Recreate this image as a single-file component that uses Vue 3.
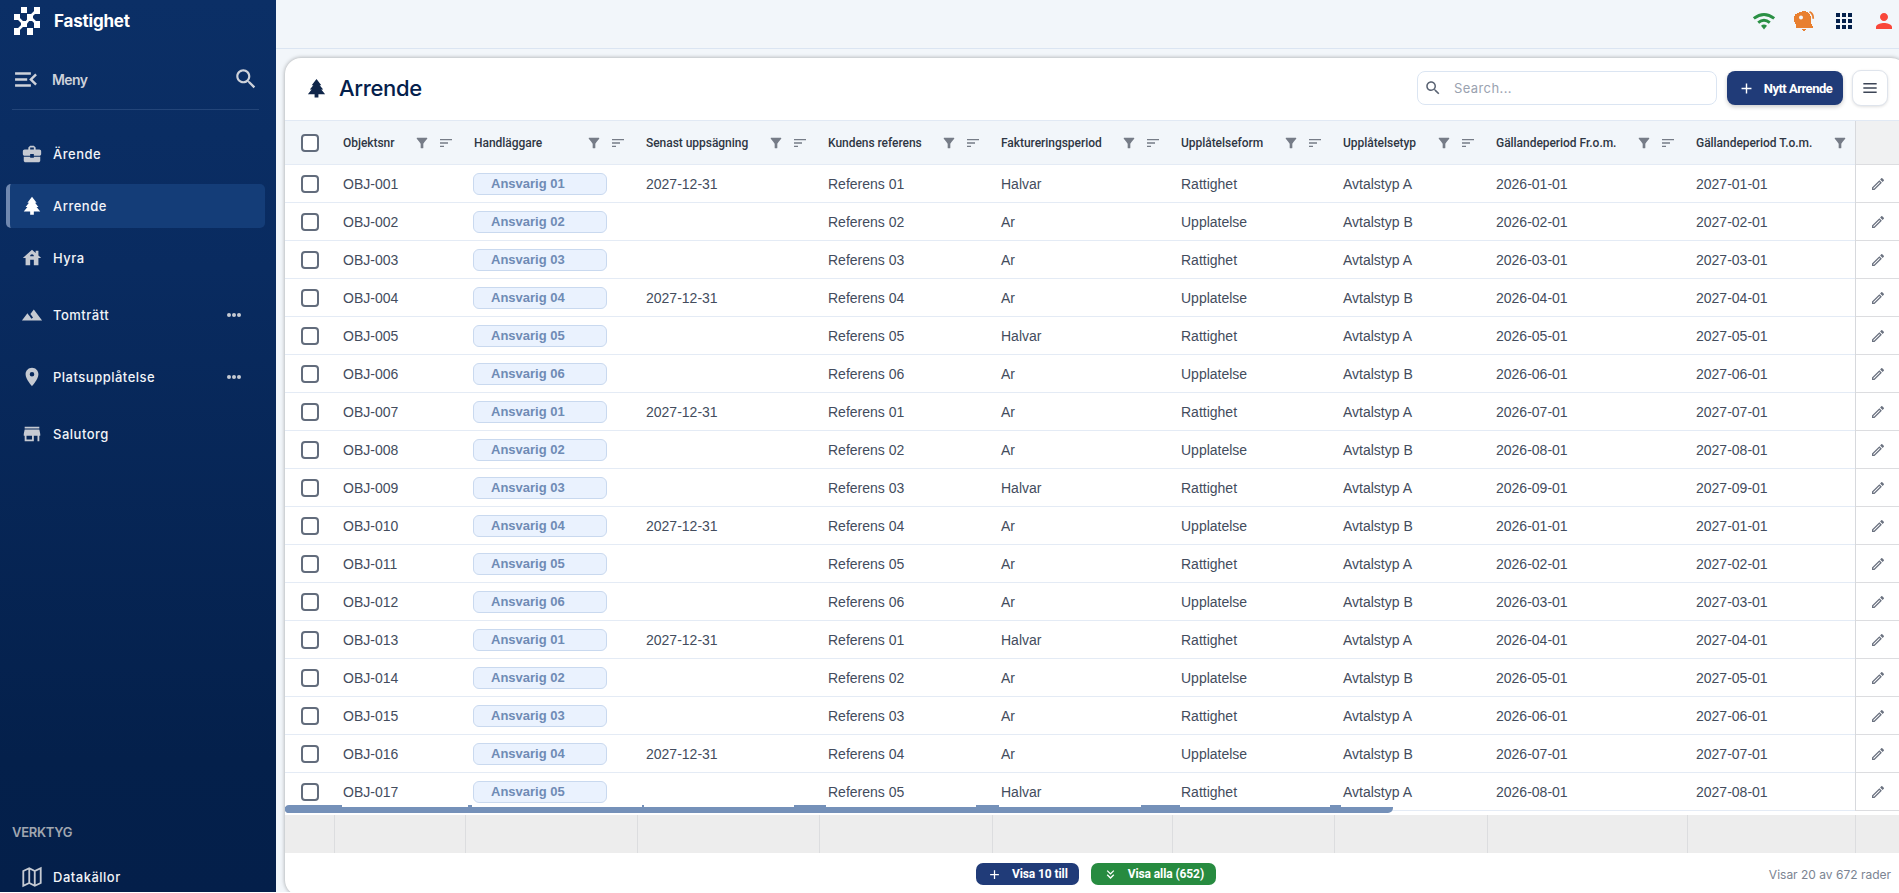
<script setup>
import { ref } from 'vue';

const search = ref('');

const icons = {
  work: 'M10 16v-1H3.01L3 19c0 1.11.89 2 2 2h14c1.11 0 2-.89 2-2v-4h-7v1h-4zm10-9h-4.01V5l-2-2h-4l-2 2v2H4c-1.1 0-2 .9-2 2v3c0 1.11.89 2 2 2h6v-2h4v2h6c1.1 0 2-.9 2-2V9c0-1.1-.9-2-2-2zm-6 0h-4V5h4v2z',
  tree: 'M10 21.500v-3.500H3l4-5H5l3.700-4.500H7l5-6.500 5 6.500h-1.700L19 13h-2l4 5h-7v3.500h-4z',
  house: 'M19 9.3V4h-3v2.6L12 3 2 12h3v8h5v-6h4v6h5v-8h3l-3-2.7zM10 10c0-1.1.9-2 2-2s2 .9 2 2h-4z',
  terrain: 'M14 6l-3.75 5 2.85 3.8-1.6 1.2C9.81 13.75 7 10 7 10l-6 8h22L14 6z',
  pin: 'M12 2C8.13 2 5 5.13 5 9c0 5.25 7 13 7 13s7-7.75 7-13c0-3.87-3.13-7-7-7zm0 9.5a2.5 2.5 0 0 1 0-5 2.5 2.5 0 0 1 0 5z',
  store: 'M20 4H4v2h16V4zm1 10v-2l-1-5H4l-1 5v2h1v6h10v-6h4v6h2v-6h1zm-9 4H6v-4h6v4z',
  search: 'M15.5 14h-.79l-.28-.27C15.41 12.59 16 11.11 16 9.5 16 5.91 13.09 3 9.5 3S3 5.91 3 9.5 5.91 16 9.5 16c1.61 0 3.09-.59 4.23-1.57l.27.28v.79l5 4.99L20.49 19l-4.99-5zm-6 0C7.01 14 5 11.99 5 9.5S7.01 5 9.5 5 14 7.01 14 9.5 11.99 14 9.5 14z',
  filter: 'M4.25 5.61C6.27 8.2 10 13 10 13v6c0 .55.45 1 1 1h2c.55 0 1-.45 1-1v-6s3.72-4.8 5.74-7.39c.51-.66.04-1.61-.79-1.61H5.04c-.83 0-1.3.95-.79 1.61z',
  sort: 'M3 18h6v-2H3v2zM3 6v2h18V6H3zm0 7h12v-2H3v2z',
  edit: 'M14.06 9.02l.92.92L5.92 19H5v-.92l9.06-9.06M17.66 3c-.25 0-.51.1-.7.29l-1.83 1.83 3.75 3.75 1.83-1.83a.996.996 0 0 0 0-1.41l-2.34-2.34c-.2-.2-.45-.29-.71-.29zm-3.6 3.19L3 17.25V21h3.75L17.81 9.94l-3.75-3.75z',
  plus: 'M19 13h-6v6h-2v-6H5v-2h6V5h2v6h6v2z'
};

const menuItems = [
  { label: 'Ärende', icon: 'work', size: 'normal' },
  { label: 'Arrende', icon: 'tree', size: 'normal', active: true },
  { label: 'Hyra', icon: 'house', size: 'short' },
  { label: 'Tomträtt', icon: 'terrain', size: 'tall', more: true },
  { label: 'Platsupplåtelse', icon: 'pin', size: 'tall', more: true },
  { label: 'Salutorg', icon: 'store', size: 'last' }
];

const columns = [
  { key: 'id', label: 'Objektsnr' },
  { key: 'handler', label: 'Handläggare' },
  { key: 'notice', label: 'Senast uppsägning' },
  { key: 'reference', label: 'Kundens referens' },
  { key: 'billing', label: 'Faktureringsperiod' },
  { key: 'form', label: 'Upplåtelseform' },
  { key: 'type', label: 'Upplåtelsetyp' },
  { key: 'from', label: 'Gällandeperiod Fr.o.m.' },
  { key: 'to', label: 'Gällandeperiod T.o.m.' }
];

const pad = (n) => String(n).padStart(2, '0');

const rows = Array.from({ length: 17 }, (_, i) => ({
  id: 'OBJ-0' + pad(i + 1),
  handler: 'Ansvarig ' + pad((i % 6) + 1),
  notice: i % 3 === 0 ? '2027-12-31' : '',
  reference: 'Referens ' + pad((i % 6) + 1),
  billing: i % 4 === 0 ? 'Halvar' : 'Ar',
  form: i % 2 ? 'Upplatelse' : 'Rattighet',
  type: i % 2 ? 'Avtalstyp B' : 'Avtalstyp A',
  from: `2026-${pad((i % 9) + 1)}-01`,
  to: `2027-${pad((i % 9) + 1)}-01`
}));

// raised parts of the horizontal scrollbar thumb, relative to the table
const ridges = [
  { left: 183, width: 4 },
  { left: 357, width: 2 },
  { left: 509, width: 32 },
  { left: 691, width: 23 },
  { left: 856, width: 39 },
  { left: 1045, width: 11 }
];
</script>

<template>
  <div class="layout">
    <aside class="sidebar">
      <div class="brand">
        <svg class="logo" viewBox="0 0 26 28">
          <path d="M7 0h6v6H7zM20 0h6v7h-6zM0 7h6v6H0zM13 7h6v7h-6zM7 14h6v6H7zM20 14h6v7h-6zM0 21h6v7H0zM13 21h6v7h-6z" />
          <path class="links" d="M18 8l4-4M4 11l5 5M12 16l3-4M17 11l5 5M4 23l5-5" />
        </svg>
        <span class="brand-name">Fastighet</span>
      </div>

      <div class="menu-head">
        <svg class="menu-open" viewBox="3 5 18 14"><path d="M3 18h13v-2H3v2zM3 13h10v-2H3v2zm0-7v2h13V6H3zm18 9.59L17.42 12 21 8.41 19.59 7l-5 5 5 5L21 15.59z" /></svg>
        <span>Meny</span>
        <svg class="menu-search" viewBox="0 0 24 24"><path :d="icons.search" /></svg>
      </div>

      <nav class="nav">
        <a v-for="item in menuItems" :key="item.label" class="nav-item" :class="[item.size, { active: item.active }]">
          <svg class="nav-icon" viewBox="0 0 24 24"><path :d="icons[item.icon]" /></svg>
          <span>{{ item.label }}</span>
          <svg v-if="item.more" class="more" viewBox="0 0 14 4"><circle cx="2" cy="2" r="2" /><circle cx="7" cy="2" r="2" /><circle cx="12" cy="2" r="2" /></svg>
        </a>
      </nav>

      <div class="tools">
        <div class="tools-title">VERKTYG</div>
        <a class="nav-item normal">
          <svg class="nav-icon outline" viewBox="0 0 24 24"><path d="M2.500 5.500l6.500-3 6 3 6.500-3v16l-6.500 3-6-3-6.500 3zM9 2.500v16M15 5.500v16" /></svg>
          <span>Datakällor</span>
        </a>
      </div>
    </aside>

    <div class="content">
      <header class="topbar">
        <svg class="icon-24 green" viewBox="0 0 24 24"><path class="arc" d="M1.800 9.400Q12 1.600 22.200 9.400M6.200 13.600Q12 9 17.800 13.600" /><path d="M9 16.800q3-2.400 6 0L12 20.500z" /></svg>
        <svg class="icon-24 orange" viewBox="0 0 24 24"><path fill-rule="evenodd" d="M4 5h1V4h2V3h3V2h4v1h2v1h1v1h1v2h1v8h1v2h1v2H4v-4H3v-2H2V7h1V5zm5 1.500a2 2 0 1 0 0 4 2 2 0 0 0 0-4zM10 20h4v1h-1v1h-2v-1h-1z" /><path class="ring" d="M17.500 2.800q4 2 3.700 7" /></svg>
        <svg class="icon-24 navy" viewBox="0 0 24 24"><path d="M4 8h4V4H4v4zm6 12h4v-4h-4v4zm-6 0h4v-4H4v4zm0-6h4v-4H4v4zm6 0h4v-4h-4v4zm6-10v4h4V4h-4zm-6 4h4V4h-4v4zm6 6h4v-4h-4v4zm0 6h4v-4h-4v4z" /></svg>
        <svg class="icon-24 red" viewBox="0 0 24 24"><path d="M12 12c2.210 0 4-1.790 4-4s-1.790-4-4-4-4 1.790-4 4 1.790 4 4 4zm0 2c-2.670 0-8 1.340-8 4v2h16v-2c0-2.660-5.330-4-8-4z" /></svg>
      </header>

      <main class="card">
        <div class="card-head">
          <svg class="title-icon" viewBox="0 0 24 24"><path :d="icons.tree" /></svg>
          <h1>Arrende</h1>
          <label class="search-box">
            <svg viewBox="0 0 24 24"><path :d="icons.search" /></svg>
            <input v-model="search" type="text" placeholder="Search..." />
          </label>
          <button class="btn-new">
            <svg viewBox="0 0 24 24"><path :d="icons.plus" /></svg>
            <span>Nytt Arrende</span>
          </button>
          <button class="btn-menu">
            <svg viewBox="0 0 24 24"><path d="M4 18h16v-1.800H4V18zm0-5.100h16v-1.800H4v1.800zM4 6v1.800h16V6H4z" /></svg>
          </button>
        </div>

        <div class="table">
          <div class="row head">
            <div class="cell check"><span class="checkbox"></span></div>
            <div v-for="col in columns" :key="col.key" class="cell th" :class="col.key">
              <span>{{ col.label }}</span>
              <svg class="filter" viewBox="0 0 24 24"><path :d="icons.filter" /></svg>
              <svg v-if="col.key !== 'to'" class="sort" viewBox="0 0 24 24"><path :d="icons.sort" /></svg>
            </div>
            <div class="cell edit"></div>
          </div>

          <div v-for="row in rows" :key="row.id" class="row">
            <div class="cell check"><span class="checkbox"></span></div>
            <div v-for="col in columns" :key="col.key" class="cell">
              <span v-if="col.key === 'handler'" class="chip">{{ row.handler }}</span>
              <template v-else>{{ row[col.key] }}</template>
            </div>
            <div class="cell edit"><svg viewBox="0 0 24 24"><path :d="icons.edit" /></svg></div>
          </div>

          <div class="scroll-thumb">
            <span class="cap"></span>
            <span v-for="r in ridges" :key="r.left" class="ridge" :style="{ left: r.left + 'px', width: r.width + 'px' }"></span>
          </div>
          <div class="scroll-gap"></div>
          <div class="row summary">
            <div v-for="n in 11" :key="n" class="cell"></div>
          </div>
        </div>

        <footer class="card-foot">
          <div class="foot-actions">
            <button class="btn-more">
              <svg viewBox="0 0 24 24"><path :d="icons.plus" /></svg>
              <span>Visa 10 till</span>
            </button>
            <button class="btn-all">
              <svg viewBox="0 0 24 24"><path d="M18 6.410L16.590 5 12 9.580 7.410 5 6 6.410l6 6zM18 13l-1.410-1.410L12 16.170l-4.590-4.580L6 13l6 6z" /></svg>
              <span>Visa alla (652)</span>
            </button>
          </div>
          <span class="count">Visar 20 av 672 rader</span>
        </footer>
      </main>
    </div>
  </div>
</template>

<style>
body {
  margin: 0;
  background: #fff;
  overflow: hidden;
}
</style>

<style scoped>
* {
  box-sizing: border-box;
}

.layout {
  display: flex;
  width: 100%;
  height: 892px;
  overflow: hidden;
  font-family: Inter, "Liberation Sans", sans-serif;
}

svg {
  display: block;
  flex: none;
  fill: currentColor;
}

button {
  display: flex;
  align-items: center;
  justify-content: center;
  border: none;
  padding: 0;
  font-family: Roboto, sans-serif;
}

.icon-24 {
  width: 24px;
  height: 24px;
}

/* --- Sidebar --- */
.sidebar {
  display: flex;
  flex-direction: column;
  flex: none;
  width: 276px;
  background: linear-gradient(180deg, #0b2f66 0%, #092b60 30%, #04204b 85%, #041f4a 100%);
  color: #ced2da;
}

.brand {
  display: flex;
  align-items: center;
  gap: 14px;
  height: 42px;
  padding-left: 14px;
  color: #fff;
}

.logo {
  width: 26px;
  height: 28px;
}

.links {
  stroke: currentColor;
  stroke-width: 2.6;
  fill: none;
}

.brand-name {
  font-size: 17px;
  font-weight: 700;
  letter-spacing: -0.2px;
}

.menu-head {
  display: flex;
  align-items: center;
  height: 68px;
  margin: 0 17px 0 12px;
  padding: 7px 0 0 3px;
  border-bottom: 1px solid #234579;
  gap: 15px;
  font-size: 14px;
  font-weight: 600;
  letter-spacing: -0.6px;
}

.menu-open {
  width: 22px;
  height: 17px;
}

.menu-search {
  width: 26px;
  height: 26px;
  margin-left: auto;
}

.nav {
  padding: 22px 11px 0 6px;
}

.nav-item {
  display: flex;
  align-items: center;
  gap: 10px;
  height: 44px;
  padding-left: 15px;
  color: #f2f4f8;
  font-size: 13px;
  font-weight: 500;
  letter-spacing: 0.5px;
}

.nav-item.normal {
  margin-bottom: 8px;
}

.nav-item.short {
  margin-bottom: 4px;
}

.nav-item.tall {
  height: 62px;
}

.nav-item.last {
  margin-top: 4px;
}

.nav-item.active {
  padding-left: 11px;
  border-left: 4px solid #7088b0;
  border-radius: 5px;
  background: #143d78;
}

.nav-icon {
  width: 22px;
  height: 22px;
  color: #c6cad2;
}

.active .nav-icon {
  color: #fff;
}

.outline path {
  fill: none;
  stroke: currentColor;
  stroke-width: 2;
}

.more {
  width: 14px;
  height: 4px;
  margin: 0 24px 0 auto;
  color: #c6cad2;
}

.tools {
  margin-top: auto;
  padding-left: 6px;
}

.tools .nav-item {
  margin-bottom: -7px;
}

.tools-title {
  padding-left: 6px;
  margin-bottom: 14px;
  color: #a0a6b0;
  font-size: 13px;
  font-weight: 600;
  letter-spacing: -0.3px;
  line-height: 18px;
}

/* --- Content --- */
.content {
  flex: 1;
  min-width: 0;
  background: #f2f6fa;
}

.topbar {
  display: flex;
  justify-content: flex-end;
  gap: 16px;
  height: 49px;
  padding: 9px 3px 0 0;
  border-bottom: 1px solid #dbe5f2;
}

.green { color: #2a9044; }
.orange { color: #e87f2f; }
.navy { color: #04204b; }
.red { color: #f9473a; }

.arc,
.ring {
  fill: none;
  stroke: currentColor;
  stroke-width: 3;
}

.ring {
  stroke-width: 1.8;
}

.card {
  width: 1622px;
  height: 838px;
  margin: 9px 0 0 9px;
  border-radius: 16px;
  background: #fff;
  box-shadow: 0 0 4px rgba(0, 0, 0, 0.35);
  overflow: hidden;
}

.card-head {
  display: flex;
  align-items: center;
  height: 63px;
  width: 1614px;
  padding: 0 11px 2px 20px;
  border-bottom: 1px solid #e1e9f4;
  color: #04204b;
}

.title-icon {
  width: 23px;
  height: 23px;
  color: #10264a;
}

h1 {
  margin: 0 auto 0 11px;
  font-size: 22px;
  font-weight: 500;
  letter-spacing: -0.35px;
}

.search-box {
  display: flex;
  align-items: center;
  width: 300px;
  height: 34px;
  margin-right: 10px;
  border: 1px solid #dbe5f2;
  border-radius: 8px;
  color: #5a6373;
}

.search-box svg {
  width: 18px;
  height: 18px;
  margin: 0 12px 0 6px;
}

.search-box input {
  flex: 1;
  min-width: 0;
  padding: 0;
  border: none;
  outline: none;
  background: none;
  font-family: inherit;
  font-size: 13px;
  letter-spacing: 0.4px;
}

.search-box input::placeholder {
  color: #9aa2b0;
}

.btn-new {
  width: 116px;
  height: 34px;
  margin-right: 9px;
  gap: 9px;
  border-radius: 8px;
  background: #203b78;
  color: #fff;
  font-size: 13px;
  font-weight: 700;
  letter-spacing: -0.5px;
  box-shadow: 0 2px 4px rgba(0, 0, 0, 0.2);
}

.btn-new svg {
  width: 17px;
  height: 17px;
}

.btn-menu {
  width: 36px;
  height: 36px;
  border: 1px solid #dfe4ec;
  border-radius: 9px;
  background: #fff;
  color: #3c4556;
  box-shadow: 0 1px 3px rgba(0, 0, 0, 0.12);
}

.btn-menu svg {
  width: 20px;
  height: 20px;
}

/* --- Table --- */
.table {
  position: relative;
  width: 1614px;
}

.row {
  display: grid;
  grid-template-columns: 50px 131px 172px 182px 173px 180px 162px 153px 200px 168px 43px;
  height: 38px;
  color: #434c5d;
  font-family: "Liberation Sans", Arial, sans-serif;
  font-size: 14px;
}

.cell {
  display: flex;
  align-items: center;
  padding-left: 8px;
  border-bottom: 1px solid #e4ebf5;
  white-space: nowrap;
}

.row.head {
  height: 44px;
  background: #f2f6fa;
  color: #2f3744;
  font-family: Roboto, sans-serif;
  font-size: 12px;
  font-weight: 500;
  letter-spacing: -0.04px;
}

.th {
  gap: 8px;
  padding-right: 12px;
}

.th.to {
  padding-right: 8px;
}

.th span {
  margin-right: auto;
}

.th svg {
  width: 16px;
  height: 16px;
  color: #767c87;
}

.check {
  padding-left: 16px;
}

.checkbox {
  width: 18px;
  height: 18px;
  border: 2px solid #626c7c;
  border-radius: 4px;
  background: #fff;
}

.chip {
  width: 134px;
  height: 22px;
  padding-left: 17px;
  margin-left: -1px;
  border: 1px solid #c9d9ef;
  border-radius: 6px;
  background: #eaf2fe;
  color: #6f8bb5;
  font-size: 13px;
  font-weight: 700;
  line-height: 20px;
}

.edit {
  position: relative;
  justify-content: center;
  padding: 0;
  border-bottom-color: #dcdde0;
  color: #6b7280;
}

.edit::before {
  content: "";
  position: absolute;
  left: -1px;
  top: 0;
  bottom: -1px;
  width: 1px;
  background: #d7d9dd;
}

.head .edit {
  background: #f0f1f2;
}

.edit svg {
  width: 16px;
  height: 16px;
}

.scroll-thumb {
  position: absolute;
  left: 0;
  top: 686px;
  width: 1108px;
  height: 6px;
  border-radius: 0 0 5px 4px;
  background: #7591b9;
}

.cap,
.ridge {
  position: absolute;
  top: -2px;
  height: 3px;
  background: #7591b9;
}

.cap {
  left: 0;
  width: 57px;
  height: 8px;
  border-radius: 4px 0 0 4px;
}

.scroll-gap {
  height: 4px;
}

.summary {
  background: #ededed;
}

.summary .cell {
  border-bottom: none;
  border-right: 1px solid #dcdddf;
}

.summary .cell:last-child {
  border-right: none;
}

/* --- Footer --- */
.card-foot {
  display: flex;
  align-items: center;
  justify-content: flex-end;
  width: 1614px;
  height: 42px;
  padding-right: 8px;
}

.foot-actions {
  display: flex;
  gap: 12px;
  margin-right: 553px;
}

.foot-actions button {
  height: 22px;
  gap: 10px;
  border-radius: 7px;
  color: #fff;
  font-size: 12px;
  font-weight: 700;
  letter-spacing: -0.1px;
}

.foot-actions svg {
  width: 15px;
  height: 15px;
}

.btn-more {
  width: 103px;
  background: #203b78;
}

.btn-all {
  width: 125px;
  background: #278b40;
}

.count {
  color: #7b8492;
  font-size: 12px;
}
</style>
